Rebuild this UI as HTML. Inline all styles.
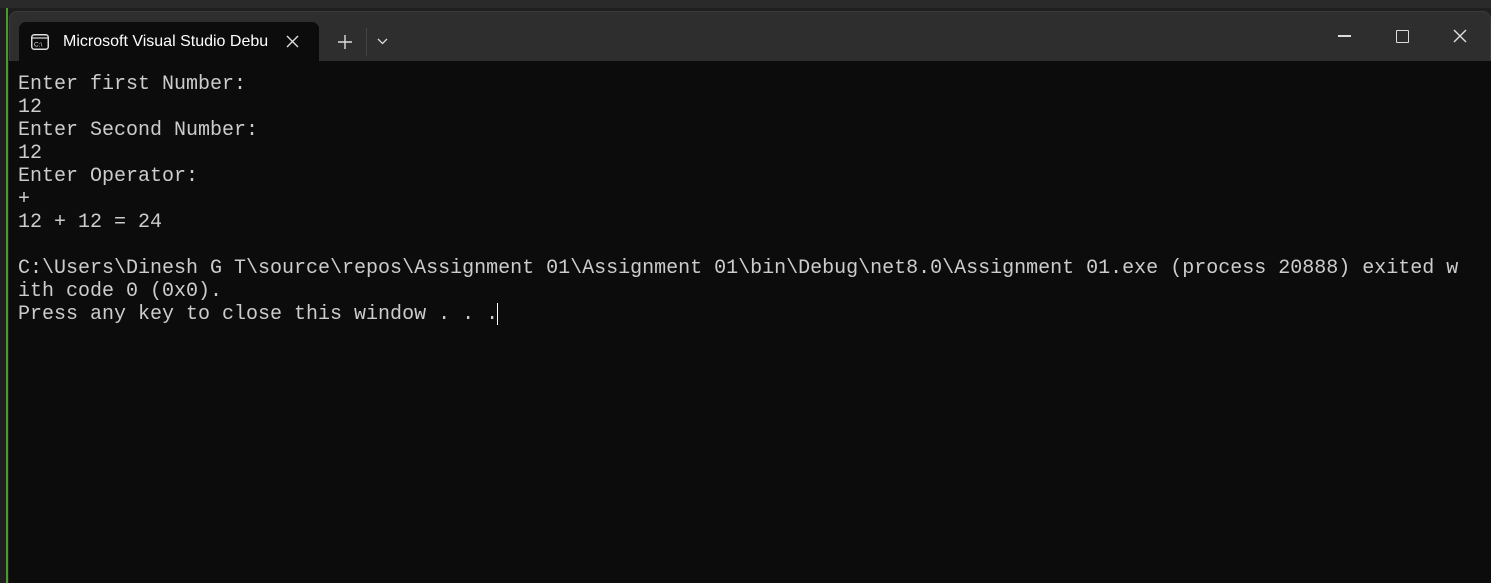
<!DOCTYPE html>
<html><head><style>
body{margin:0;width:1491px;height:583px;background:#1f1f1f;overflow:hidden;position:relative;font-family:"Liberation Sans",sans-serif}
.top{position:absolute;left:0;top:0;width:1491px;height:8px;background:#2a2a2a}
.green{position:absolute;left:6px;top:8px;width:2px;height:575px;background:#4c9a2a}
.win{position:absolute;left:9px;top:11px;width:1482px;height:572px;background:#2e2e2e;border-top-left-radius:8px;border-top-right-radius:8px;border:1px solid #3a3a3a;box-sizing:border-box}
.term{position:absolute;left:9px;top:61px;width:1482px;height:522px;background:#0c0c0c}
.tab{position:absolute;left:19px;top:22px;width:300px;height:40px;background:#0c0c0c;border-radius:7px 7px 0 0}
.tab .t{position:absolute;left:44px;top:11px;font-size:16px;color:#fff;width:205px;overflow:hidden;white-space:nowrap}
pre{position:absolute;left:18px;top:73px;margin:0;font-family:"Liberation Mono",monospace;font-size:20px;line-height:23px;color:#cccccc}
.cur{position:absolute;left:497px;top:303px;width:1px;height:22px;background:#fff}
</style></head><body>
<div class="top"></div>
<div class="green"></div>
<div class="win"></div>
<div class="term"></div>
<div class="tab">
<svg style="position:absolute;left:12px;top:12px" width="18" height="16" viewBox="0 0 18 16"><rect x="0.75" y="0.75" width="16.5" height="14.5" rx="2.5" fill="none" stroke="#ddd" stroke-width="1.5"/><line x1="1" y1="4" x2="17" y2="4" stroke="#ddd" stroke-width="1.2"/><text x="3" y="12.5" font-size="6.5" fill="#ddd" font-family="Liberation Sans">C:\</text></svg>
<div class="t">Microsoft Visual Studio Debug Console</div>
<svg style="position:absolute;left:267px;top:13px" width="13" height="13"><path d="M1 1L12 12M12 1L1 12" stroke="#ddd" stroke-width="1.4"/></svg>
</div>
<svg style="position:absolute;left:338px;top:35px" width="14" height="14"><path d="M7 0V14M0 7H14" stroke="#ddd" stroke-width="1.4"/></svg>
<div style="position:absolute;left:366px;top:28px;width:1px;height:28px;background:#444"></div>
<svg style="position:absolute;left:377px;top:38px" width="11" height="7"><path d="M1 1L5.5 5.5L10 1" stroke="#ddd" stroke-width="1.3" fill="none"/></svg>
<div style="position:absolute;left:1338px;top:35px;width:13px;height:1.5px;background:#ddd"></div>
<div style="position:absolute;left:1396px;top:30px;width:11px;height:11px;border:1.3px solid #ddd;border-radius:1px"></div>
<svg style="position:absolute;left:1453px;top:29px" width="14" height="14"><path d="M1 1L13 13M13 1L1 13" stroke="#ddd" stroke-width="1.4"/></svg>
<pre>Enter first Number:
12
Enter Second Number:
12
Enter Operator:
+
12 + 12 = 24

C:\Users\Dinesh G T\source\repos\Assignment 01\Assignment 01\bin\Debug\net8.0\Assignment 01.exe (process 20888) exited w
ith code 0 (0x0).
Press any key to close this window . . .</pre>
<div class="cur"></div>
</body></html>
